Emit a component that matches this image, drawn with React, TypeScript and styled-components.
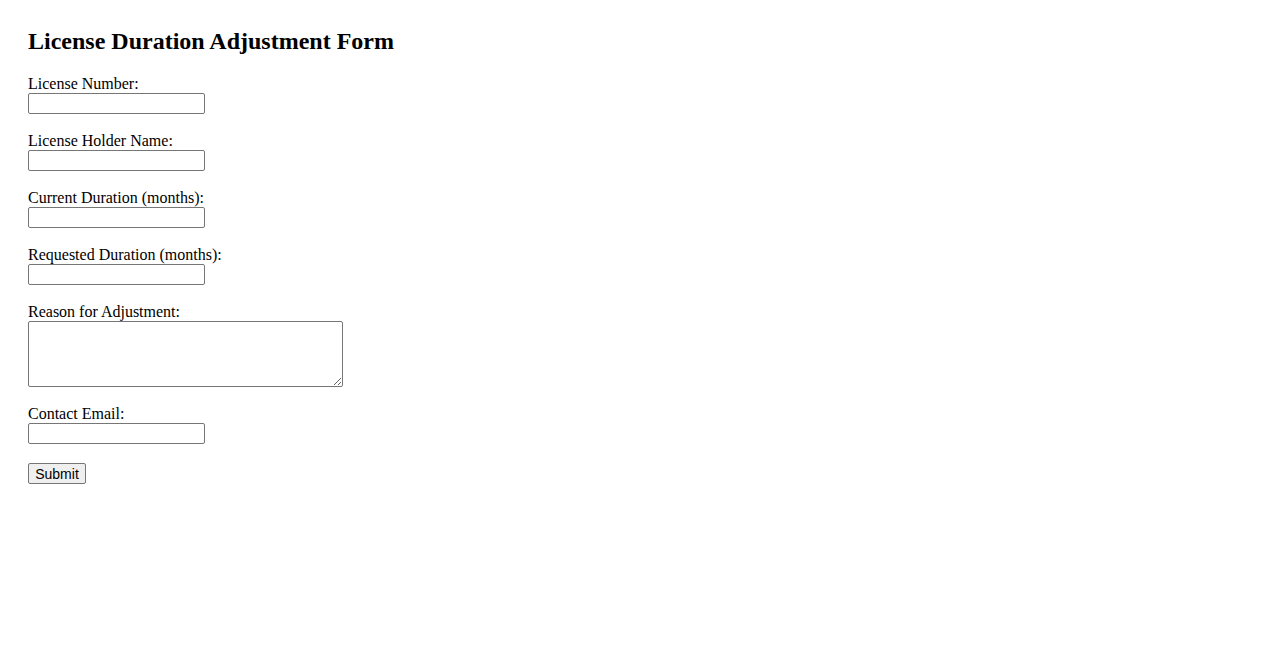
import React from "react";
import styled, { createGlobalStyle } from "styled-components";

const GlobalStyle = createGlobalStyle`
  html, body {
    margin: 0;
    padding: 0;
    background: #fff;
  }
  body {
    font-family: "Liberation Serif", "Times New Roman", serif;
    font-size: 16px;
    color: #000;
  }
`;

const Page = styled.div`
  padding: 28px;
`;

const Title = styled.h2`
  font-size: 24px;
  font-weight: bold;
  margin: 0 0 20px;
`;

const Form = styled.form`
  display: flex;
  flex-direction: column;
  align-items: flex-start;
`;

const Field = styled.div`
  display: flex;
  flex-direction: column;
  align-items: flex-start;
  margin-bottom: 18px;
`;

const Label = styled.label`
  display: block;
  height: 18px;
  line-height: 18px;
`;

const TextInput = styled.input`
  box-sizing: border-box;
  width: 177px;
  height: 21px;
  margin: 0;
  padding: 1px 2px;
  border: 1px solid #767676;
  border-radius: 2px;
  font-family: "Liberation Sans", Arial, sans-serif;
  font-size: 13.33px;
  background: #fff;
`;

const TextArea = styled.textarea`
  box-sizing: border-box;
  width: 315px;
  height: 66px;
  margin: 0;
  padding: 2px;
  border: 1px solid #767676;
  border-radius: 2px;
  font-family: "Liberation Mono", monospace;
  font-size: 13.33px;
  background: #fff;
`;

const SubmitButton = styled.button`
  box-sizing: border-box;
  width: 58px;
  height: 21px;
  padding: 0 6px;
  margin: 1px 0 0;
  border: 1px solid #767676;
  border-radius: 2px;
  background: #efefef;
  color: #000;
  font-family: "Liberation Sans", Arial, sans-serif;
  font-size: 14px;
`;

const fields = [
  { id: "licenseNumber", label: "License Number:" },
  { id: "holderName", label: "License Holder Name:" },
  { id: "currentDuration", label: "Current Duration (months):" },
  { id: "requestedDuration", label: "Requested Duration (months):" },
];

const App: React.FC = () => {
  return (
    <Page>
      <GlobalStyle />
      <Title>License Duration Adjustment Form</Title>
      <Form onSubmit={(e) => e.preventDefault()}>
        {fields.map((f) => (
          <Field key={f.id}>
            <Label htmlFor={f.id}>{f.label}</Label>
            <TextInput id={f.id} type="text" />
          </Field>
        ))}
        <Field>
          <Label htmlFor="reason">Reason for Adjustment:</Label>
          <TextArea id="reason" />
        </Field>
        <Field>
          <Label htmlFor="email">Contact Email:</Label>
          <TextInput id="email" type="email" />
        </Field>
        <SubmitButton type="submit">Submit</SubmitButton>
      </Form>
    </Page>
  );
};

export default App;
